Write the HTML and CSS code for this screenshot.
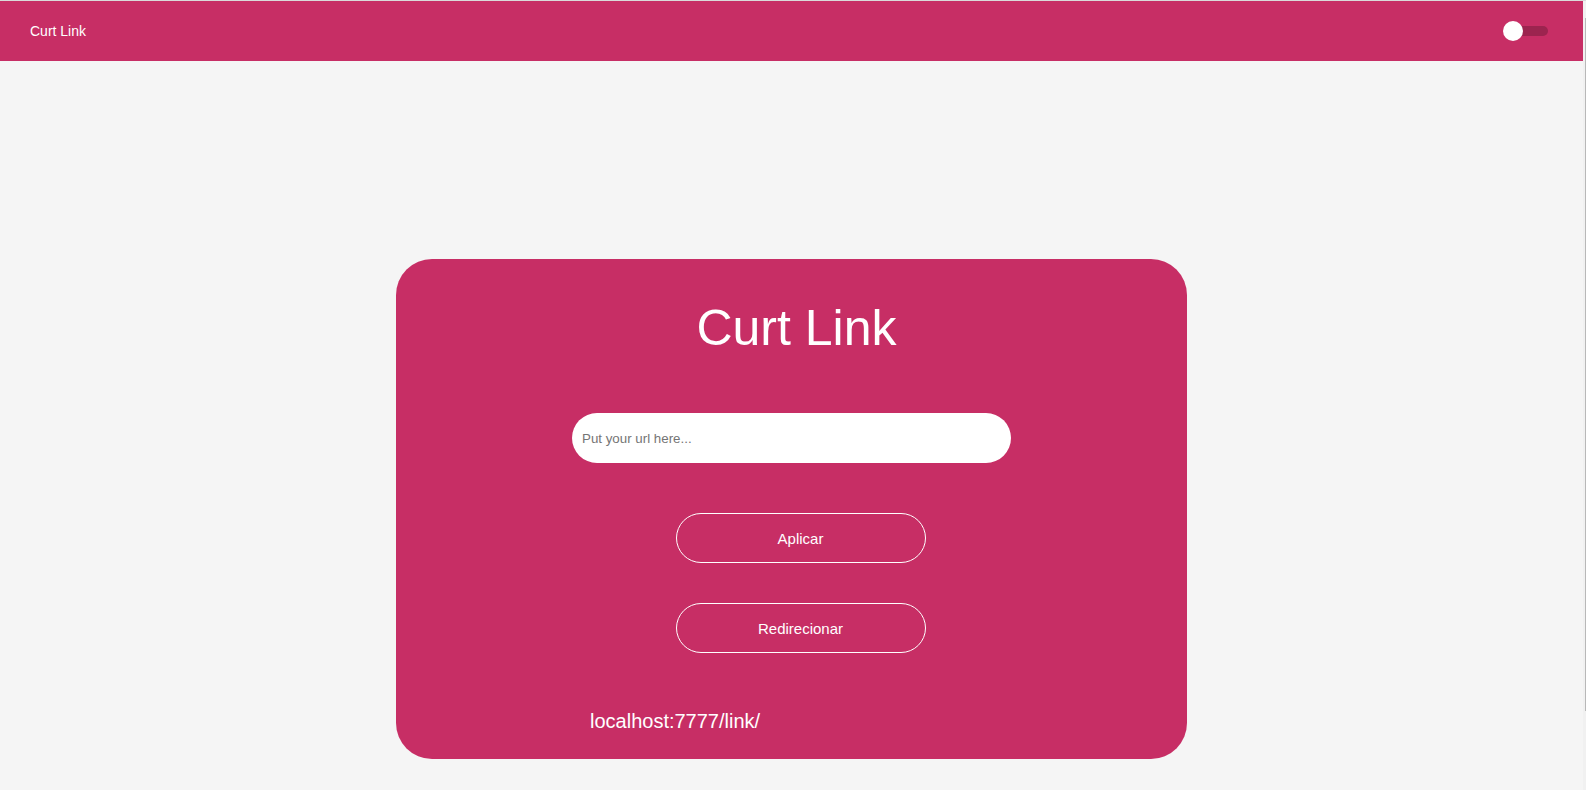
FILE: index.html
```html
<!DOCTYPE html>
<html lang="pt-BR">
<head>
<meta charset="utf-8">
<title>Curt Link</title>
<link rel="stylesheet" href="styles.css">
</head>
<body>
<div class="page">
  <header class="header">
    <span>Curt Link</span>
    <input class="switch" type="checkbox" role="switch" aria-label="Theme">
  </header>
  <main class="main">
    <form class="card">
      <h1 class="title">Curt Link</h1>
      <input class="url" type="text" placeholder="Put your url here..." aria-label="URL">
      <div class="actions">
        <button class="button" type="button">Aplicar</button>
        <button class="button" type="button">Redirecionar</button>
      </div>
      <p class="result">localhost:7777/link/</p>
    </form>
  </main>
</div>
<div class="scrollbar"><div class="thumb"></div></div>
</body>
</html>
```

FILE: styles.css
```css
* {
  box-sizing: border-box;
  margin: 0;
}

body {
  display: flex;
  min-height: 100vh;
  background: #f5f5f5;
  color: #fff;
  font-family: "Liberation Sans", Arial, sans-serif;
  font-size: 14px;
}

.page {
  flex: 1;
  border-top: 1px solid #dadada;
}

.header {
  display: flex;
  align-items: center;
  justify-content: space-between;
  height: 60px;
  padding: 0 35px 0 30px;
  background: #c72e65;
}

.switch {
  appearance: none;
  position: relative;
  width: 40px;
  height: 10px;
  border-radius: 5px;
  background: #9c244f;
}

.switch::before {
  content: "";
  position: absolute;
  top: -5px;
  left: -5px;
  width: 20px;
  height: 20px;
  border-radius: 50%;
  background: #fff;
}

.switch:checked::before {
  left: 25px;
}

.main {
  display: flex;
  justify-content: center;
  padding: 198px 0 31px;
}

.card {
  display: flex;
  flex-direction: column;
  align-items: center;
  width: 50%;
  padding: 40px 0 25px;
  border-radius: 36px;
  background: #c72e65;
}

.title {
  padding-left: 10px;
  font-size: 50px;
  font-weight: 400;
  line-height: 58px;
}

.url {
  width: 439px;
  max-width: 90%;
  height: 50px;
  margin-top: 56px;
  padding: 0 10px;
  border: 0;
  border-radius: 25px;
  background: #fff;
  font-family: inherit;
}

.url::placeholder {
  color: #757575;
}

.actions {
  display: flex;
  flex-direction: column;
  gap: 40px;
  margin-top: 50px;
  padding-left: 18px;
}

.button {
  width: 250px;
  height: 50px;
  border: 1px solid #fff;
  border-radius: 25px;
  background: transparent;
  color: #fff;
  font-family: inherit;
  font-size: 15px;
}

.result {
  width: 439px;
  max-width: 90%;
  margin-top: 56px;
  padding-left: 18px;
  font-size: 20px;
  line-height: 25px;
}

.scrollbar {
  width: 3px;
  padding: 17px 0 0 2px;
  border-top: 1px solid #dadada;
  background: #f1f1f1;
}

.thumb {
  height: calc(88vh - 2px);
  background: #b8b8b8;
}
```
